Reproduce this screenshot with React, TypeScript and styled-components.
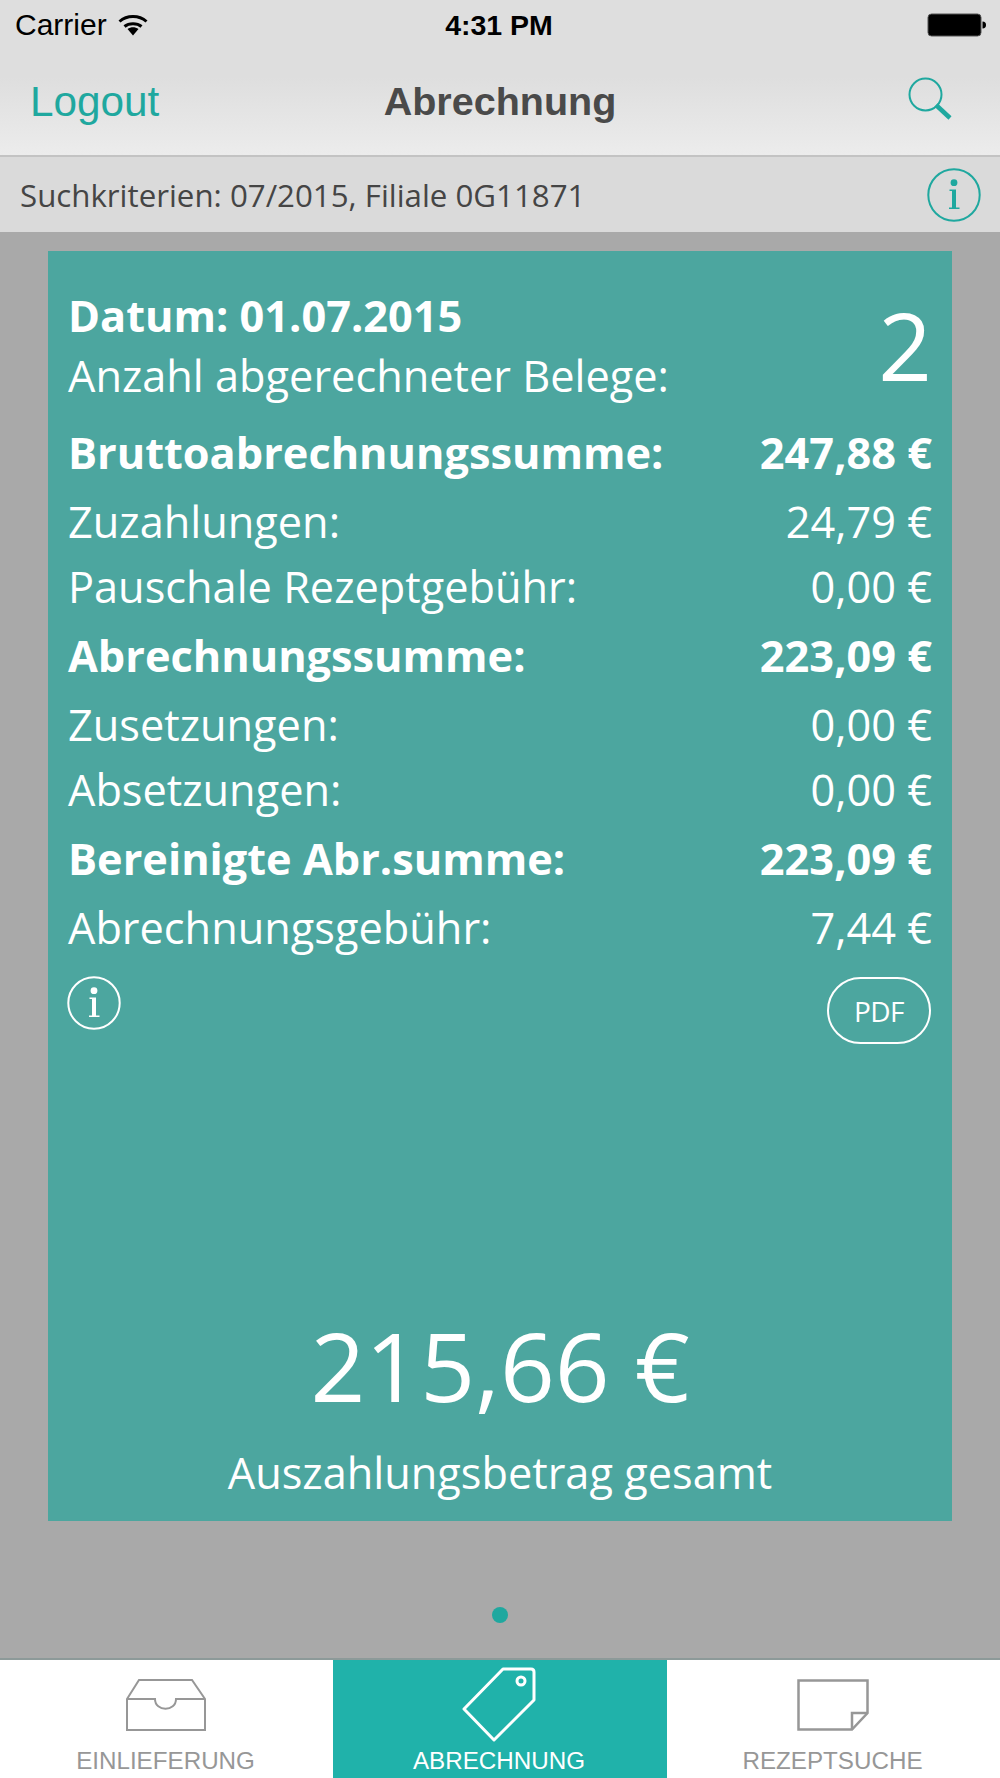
import React from "react";
import styled, { createGlobalStyle } from "styled-components";

const Global = createGlobalStyle`
  html, body { margin: 0; padding: 0; background: #a9a9a9; }
  * { box-sizing: border-box; }
`;
const Page = styled.div`
  width: 1000px; height: 1778px; display: flex; flex-direction: column; overflow: hidden;
  font-family: "Open Sans", sans-serif;
`;
const Header = styled.div`
  height: 155px; display: flex; flex-direction: column;
  background: linear-gradient(#dedede 0%, #dedede 50%, #ececec 100%);
  font-family: "Liberation Sans", Arial, sans-serif;
`;
const StatusBar = styled.div`
  height: 50px; padding: 0 13px 0 15px; display: grid; grid-template-columns: 1fr auto 1fr; align-items: center;
  font-size: 30px; color: #000;
`;
const StatusLeft = styled.div`display: flex; align-items: center; gap: 11px;`;
const StatusTime = styled.div`font-weight: 700; font-size: 28.5px; margin-right: 4px;`;
const StatusRight = styled.div`display: flex; justify-content: flex-end;`;
const NavBar = styled.div`
  flex: 1; display: grid; grid-template-columns: 1fr auto 1fr; align-items: center; padding: 0 30px 2px;
`;
const Logout = styled.div`font-size: 42.3px; color: #1fa89f;`;
const Title = styled.div`font-size: 39.5px; font-weight: 700; color: #4a4a4a;`;
const NavRight = styled.div`display: flex; justify-content: flex-end; padding-right: 18px; margin-bottom: 5px;`;
const SubBar = styled.div`
  height: 77px; background: #dadada; border-top: 2px solid #c3c3c3; display: flex; align-items: center;
  justify-content: space-between; padding: 0 19px 0 20px; font-size: 31.25px; color: #454545;
`;
const Main = styled.div`
  flex: 1; background: #a9a9a9; padding: 19px 48px 0; display: flex; flex-direction: column; align-items: center;
`;
const Card = styled.div`
  width: 904px; height: 1270px; background: #4ca69f; color: #fff; padding: 35px 20px 0 20px; display: flex; flex-direction: column;
`;
const TopRow = styled.div`display: flex; justify-content: space-between; height: 138px;`;
const TopLabels = styled.div`display: flex; flex-direction: column;`;
const DateLine = styled.div`font-size: 43.3px; font-weight: 700; line-height: 60px;`;
const CountLabel = styled.div`font-size: 43.3px; line-height: 60px;`;
const Count = styled.div`font-size: 94px; line-height: 128px; margin-top: -5px;`;
const Row = styled.div<{ $bold?: boolean; $h: number }>`
  display: flex; justify-content: space-between; align-items: flex-start;
  height: ${p => p.$h}px; line-height: 58px; font-size: 43.3px; font-weight: ${p => (p.$bold ? 700 : 400)};
`;
const Actions = styled.div`display: flex; justify-content: space-between; align-items: flex-start; margin: 8px 1px 0 -1px;`;
const PdfButton = styled.div`
  width: 104px; height: 67px; border: 2.5px solid #fff; border-radius: 34px; display: flex; align-items: center; justify-content: center;
  font-size: 28px; letter-spacing: -0.5px; font-weight: 400; margin-top: 1px;
`;
const Total = styled.div`margin-top: auto; display: flex; flex-direction: column; align-items: center; padding-bottom: 18px;`;
const TotalAmount = styled.div`font-size: 96px; line-height: 130px;`;
const TotalLabel = styled.div`font-size: 43.3px; line-height: 60px; margin-top: 13px;`;
const DotWrap = styled.div`flex: 1; display: flex; align-items: center; justify-content: center; padding-top: 51px;`;
const Dot = styled.div`width: 16px; height: 16px; border-radius: 50%; background: #1fa89f;`;
const TabBar = styled.div`
  height: 120px; display: grid; grid-template-columns: 333px 334px 333px; background: #fff; border-top: 2px solid #8d9a99;
  font-family: "Liberation Sans", Arial, sans-serif;
`;
const Tab = styled.div<{ $active?: boolean }>`
  display: flex; flex-direction: column; align-items: center; padding-right: 2px;
  background: ${p => (p.$active ? "#20b2aa" : "#fff")};
  color: ${p => (p.$active ? "#fff" : "#979797")};
`;
const TabIcon = styled.div`height: 89px; display: flex; align-items: center;`;
const TabLabel = styled.div`font-size: 24.2px; line-height: 28px; margin-top: -2px;`;

const Wifi = () => (
  <svg width="30" height="22" viewBox="0 0 30 22" fill="none" stroke="#000" strokeWidth="3">
    <path d="M1.5 7.5 C9 0.8 21 0.8 28.5 7.5" />
    <path d="M6.5 12.5 C11 8.7 19 8.7 23.5 12.5" />
    <path d="M9.5 15 L15 21.5 L20.5 15 C17 12.7 13 12.7 9.5 15Z" fill="#000" stroke="none" />
  </svg>
);
const Battery = () => (
  <svg width="60" height="24" viewBox="0 0 60 24">
    <rect x="1" y="1" width="53" height="22" rx="3.5" fill="#000" stroke="#555" strokeWidth="1" />
    <path d="M55.5 8.5 C58 8.5 59 10 59 12 C59 14 58 15.5 55.5 15.5Z" fill="#000" />
  </svg>
);
const Search = () => (
  <svg width="44" height="44" viewBox="0 0 44 44" fill="none" stroke="#1fa89f">
    <circle cx="17.5" cy="17.5" r="16" strokeWidth="2" />
    <path d="M28 28 L42 41" strokeWidth="4.5" />
  </svg>
);
const InfoIcon = ({ color }: { color: string }) => (
  <svg width="54" height="54" viewBox="0 0 54 54" fill="none">
    <circle cx="27" cy="27" r="25.7" stroke={color} strokeWidth="2" />
    <circle cx="27" cy="14.7" r="3.4" fill={color} />
    <path d="M22.5 21.5 H29 V39.5 H32.5 V41 H22 V39.5 H25 V23 H22.5Z" fill={color} />
  </svg>
);
const Tray = () => (
  <svg width="80" height="52" viewBox="0 0 80 52" fill="none" stroke="#979797" strokeWidth="2">
    <path d="M13 1 H66 L79 20 V51 H1 V20Z" />
    <path d="M1 20 H29 C29 33 50 33 50 20 H79" />
  </svg>
);
const TagIcon = () => (
  <svg width="74" height="75" viewBox="0 0 74 75" fill="none" stroke="#fff" strokeWidth="3" strokeLinejoin="round">
    <path d="M2 42 L41 2 H69 Q72 2 72 5 V33 L32 73Z" />
    <circle cx="59" cy="14" r="4" />
  </svg>
);
const Note = () => (
  <svg width="72" height="52" viewBox="0 0 72 52" fill="none" stroke="#979797" strokeWidth="2.5">
    <path d="M1.5 1.5 H70.5 V34 L55 50.5 H1.5Z" />
    <path d="M55 50.5 V34 H70.5" />
  </svg>
);

const rows: { l: string; v: string; b?: boolean; h: number }[] = [
  { l: "Bruttoabrechnungssumme:", v: "247,88 €", b: true, h: 69 },
  { l: "Zuzahlungen:", v: "24,79 €", h: 65 },
  { l: "Pauschale Rezeptgebühr:", v: "0,00 €", h: 69 },
  { l: "Abrechnungssumme:", v: "223,09 €", b: true, h: 69 },
  { l: "Zusetzungen:", v: "0,00 €", h: 65 },
  { l: "Absetzungen:", v: "0,00 €", h: 69 },
  { l: "Bereinigte Abr.summe:", v: "223,09 €", b: true, h: 69 },
  { l: "Abrechnungsgebühr:", v: "7,44 €", h: 69 },
];

export default function App() {
  return (
    <Page>
      <Global />
      <Header>
        <StatusBar>
          <StatusLeft>Carrier <Wifi /></StatusLeft>
          <StatusTime>4:31 PM</StatusTime>
          <StatusRight><Battery /></StatusRight>
        </StatusBar>
        <NavBar>
          <Logout>Logout</Logout>
          <Title>Abrechnung</Title>
          <NavRight><Search /></NavRight>
        </NavBar>
      </Header>
      <SubBar>
        <span>Suchkriterien: 07/2015, Filiale 0G11871</span>
        <InfoIcon color="#1fa89f" />
      </SubBar>
      <Main>
        <Card>
          <TopRow>
            <TopLabels>
              <DateLine>Datum: 01.07.2015</DateLine>
              <CountLabel>Anzahl abgerechneter Belege:</CountLabel>
            </TopLabels>
            <Count>2</Count>
          </TopRow>
          {rows.map(r => (
            <Row key={r.l} $bold={r.b} $h={r.h}>
              <span>{r.l}</span>
              <span>{r.v}</span>
            </Row>
          ))}
          <Actions>
            <InfoIcon color="#fff" />
            <PdfButton>PDF</PdfButton>
          </Actions>
          <Total>
            <TotalAmount>215,66 €</TotalAmount>
            <TotalLabel>Auszahlungsbetrag gesamt</TotalLabel>
          </Total>
        </Card>
        <DotWrap><Dot /></DotWrap>
      </Main>
      <TabBar>
        <Tab><TabIcon><Tray /></TabIcon><TabLabel>EINLIEFERUNG</TabLabel></Tab>
        <Tab $active><TabIcon><TagIcon /></TabIcon><TabLabel>ABRECHNUNG</TabLabel></Tab>
        <Tab><TabIcon><Note /></TabIcon><TabLabel>REZEPTSUCHE</TabLabel></Tab>
      </TabBar>
    </Page>
  );
}
